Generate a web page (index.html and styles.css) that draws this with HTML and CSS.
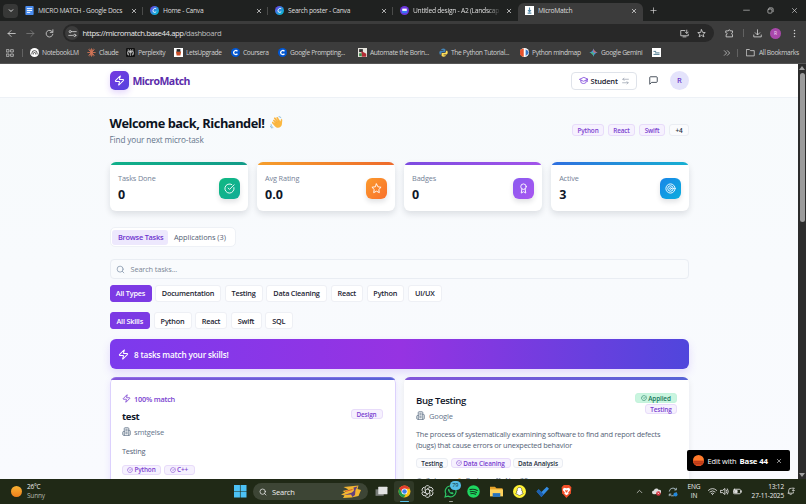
FILE: index.html
```html
<!DOCTYPE html>
<html lang="en">
<head>
  <meta charset="UTF-8" />
  <meta name="viewport" content="width=device-width, initial-scale=1.0" />
  <title>MicroMatch</title>
  <link rel="stylesheet" href="styles.css">
</head>
<body>
  <!-- shared icons -->
  <svg class="defs" width="0" height="0">
    <symbol id="i-zap" viewBox="0 0 24 24"><path d="M4 14a1 1 0 0 1-.78-1.63l9.9-10.2a.5.5 0 0 1 .86.46l-1.92 6.02A1 1 0 0 0 13 10h7a1 1 0 0 1 .78 1.63l-9.9 10.2a.5.5 0 0 1-.86-.46l1.92-6.02A1 1 0 0 0 11 14z"/></symbol>
    <symbol id="i-check" viewBox="0 0 24 24"><path d="M21.8 10A10 10 0 1 1 17 3.34M9 11l3 3L22 4"/></symbol>
    <symbol id="i-building" viewBox="0 0 24 24"><path d="M6 22V4a2 2 0 0 1 2-2h8a2 2 0 0 1 2 2v18zM6 12H4a2 2 0 0 0-2 2v6a2 2 0 0 0 2 2h2M18 9h2a2 2 0 0 1 2 2v9a2 2 0 0 1-2 2h-2M10 6h4M10 10h4M10 14h4M10 18h4"/></symbol>
    <symbol id="i-search" viewBox="0 0 24 24"><circle cx="11" cy="11" r="8"/><path d="m21 21-4.3-4.3"/></symbol>
    <symbol id="i-x" viewBox="0 0 24 24"><path d="M5 5l14 14M19 5L5 19"/></symbol>
    <symbol id="i-canva" viewBox="0 0 24 24"><circle cx="12" cy="12" r="12" fill="url(#g-canva)" stroke="none"/><path d="M16.500 8c-1-3-8-2-8.500 4s6 6 8.500 3" stroke="#fff" stroke-width="2.500"/></symbol>
    <symbol id="i-coursera" viewBox="0 0 24 24"><circle cx="12" cy="12" r="12" fill="#0056d2" stroke="none"/><path d="M17 9c-2-4-10-3-10 3s8 7 10 3" stroke="#fff" stroke-width="3.500"/></symbol>
    <linearGradient id="g-canva" x1="0" y1="0" x2="1" y2="1"><stop offset="0" stop-color="#7d2ae8"/><stop offset=".5" stop-color="#2b8fe0"/><stop offset="1" stop-color="#00c4cc"/></linearGradient>
  </svg>

  <div class="screen">
    <div class="tab-strip">
      <div class="tab-search"><svg class="icon" viewBox="0 0 24 24"><path d="m5 9 7 7 7-7"/></svg></div>
      <div class="tab">
        <svg class="fav" viewBox="0 0 24 24"><rect x="1" width="22" height="24" rx="2" fill="#4a8df0"/><path d="M5 7h14M5 12h14M5 17h9" stroke="#fff" stroke-width="2.500"/></svg>
        <span class="tab-title">MICRO MATCH - Google Docs</span>
        <svg class="icon close"><use href="#i-x"/></svg>
      </div>
      <div class="tab">
        <svg class="fav"><use href="#i-canva"/></svg>
        <span class="tab-title">Home - Canva</span>
        <svg class="icon close"><use href="#i-x"/></svg>
      </div>
      <div class="tab">
        <svg class="fav"><use href="#i-canva"/></svg>
        <span class="tab-title">Search poster - Canva</span>
        <svg class="icon close"><use href="#i-x"/></svg>
      </div>
      <div class="tab last">
        <svg class="fav" viewBox="0 0 24 24"><circle cx="12" cy="12" r="12" fill="#6b35dc"/><path d="M5 10h14v9H5z" fill="#3578f0"/><path d="M6 7h12v6H6z" fill="#fff"/></svg>
        <span class="tab-title fade">Untitled design - A2 (Landscap</span>
        <svg class="icon close"><use href="#i-x"/></svg>
      </div>
      <div class="tab active">
        <svg class="fav" viewBox="0 0 24 24"><rect width="24" height="24" fill="#fff"/><path d="M12 4v10M8 11l4 4 4-4M7 19h10" stroke="#5589a8" stroke-width="3" fill="none"/></svg>
        <span class="tab-title">MicroMatch</span>
        <svg class="icon close"><use href="#i-x"/></svg>
      </div>
      <svg class="icon plus" viewBox="0 0 24 24"><path d="M12 3v18M3 12h18"/></svg>
      <div class="window-buttons">
        <svg class="icon" viewBox="0 0 24 24"><path d="M2 11h20" stroke-width="2"/></svg>
        <svg class="icon" viewBox="0 0 24 24"><rect x="3" y="7" width="14" height="14" rx="3"/><path d="M8 3h9a4 4 0 0 1 4 4v9"/></svg>
        <svg class="icon"><use href="#i-x"/></svg>
      </div>
    </div>

    <div class="toolbar">
      <svg class="icon" viewBox="0 0 24 24"><path d="M22 12H3M11 4l-8 8 8 8"/></svg>
      <svg class="icon dim" viewBox="0 0 24 24"><path d="M2 12h19M13 4l8 8-8 8"/></svg>
      <svg class="icon" viewBox="0 0 24 24"><path d="M20 8a9 9 0 1 0 1 6M21 2v7h-7"/></svg>
      <div class="omnibox">
        <div class="site-info"><svg class="icon" viewBox="0 0 24 24"><circle cx="6" cy="7" r="3"/><path d="M12 7h10M2 17h10"/><circle cx="18" cy="17" r="3"/></svg></div>
        <span class="url">https://micromatch.base44.app<span>/dashboard</span></span>
        <svg class="icon" viewBox="0 0 24 24"><path d="M13 4H2v14h20v-4M8 21h8M18 3v8M14 8l4 4 4-4"/></svg>
        <svg class="icon" viewBox="0 0 24 24"><path d="m12 2 3 7 7 .5-5.500 4.500 2 7L12 17l-6.500 4 2-7L2 9.500 9 9z"/></svg>
      </div>
      <svg class="icon puzzle" viewBox="0 0 24 24"><path d="M3 5h6c0-4 5-4 5 0h6v5c-3 0-3 5 0 5v6H3v-6c4 0 4-5 0-5z"/></svg>
      <span class="sep"></span>
      <svg class="icon download" viewBox="0 0 24 24"><path d="M12 2v13M6 10l6 6 6-6M2 16v5h20v-5"/></svg>
      <span class="profile">R</span>
      <svg class="icon menu" viewBox="0 0 24 24"><path d="M12 4v.1M12 12v.1M12 20v.1" stroke-width="4"/></svg>
    </div>

    <div class="bookmarks">
      <svg class="icon apps" viewBox="0 0 24 24"><path d="M2 2h7v7H2zM15 2h7v7h-7zM2 15h7v7H2zM15 15h7v7h-7z"/></svg>
      <span class="sep"></span>
      <div class="bookmark"><svg class="fav" viewBox="0 0 24 24"><circle cx="12" cy="12" r="12" fill="#fff"/><path d="M5 17v-3a7 7 0 0 1 14 0v3M9 17v-2a3 3 0 0 1 6 0v2" stroke="#222" stroke-width="2" fill="none"/></svg><span>NotebookLM</span></div>
      <div class="bookmark"><svg class="fav" viewBox="0 0 24 24"><path d="M12 1v22M1 12h22M4 4l16 16M20 4 4 20M7 2l10 20M17 2 7 22" stroke="#d97757" stroke-width="2.200"/></svg><span>Claude</span></div>
      <div class="bookmark"><svg class="fav" viewBox="0 0 24 24"><rect width="24" height="24" rx="3" fill="#111"/><path d="M12 3v18M6 4l6 6 6-6v6H6zM4 10h16v7h-3M4 10v7h3M7 20v-5l5-5 5 5v5" stroke="#ddd" stroke-width="1.600" fill="none"/></svg><span>Perplexity</span></div>
      <div class="bookmark"><svg class="fav" viewBox="0 0 24 24"><rect width="24" height="24" fill="#fff"/><path d="M5 9h14l-2 11H7z" fill="#c84b24"/><path d="M7 3h10v7H7z" fill="#222"/></svg><span>LetsUpgrade</span></div>
      <div class="bookmark"><svg class="fav"><use href="#i-coursera"/></svg><span>Coursera</span></div>
      <div class="bookmark"><svg class="fav"><use href="#i-coursera"/></svg><span>Google Prompting...</span></div>
      <div class="bookmark"><svg class="fav" viewBox="0 0 24 24"><rect width="24" height="24" fill="#e8e6df"/><path d="M3 3h10v8H3z" fill="#333"/><path d="M9 8l13 7v8H10z" fill="#b22c35"/><path d="M3 14h7v8H3z" fill="#3c8a4a"/></svg><span>Automate the Borin...</span></div>
      <div class="bookmark"><svg class="fav" viewBox="0 0 24 24"><path d="M6 3q6-4 11 0v8H9q-4 0-4 6H2q-3-6 1-10h9V5H6z" fill="#4584b6"/><path d="M18 21q-6 4-11 0v-8h8q4 0 4-6h3q3 6-1 10h-9v2h6z" fill="#ffde57"/></svg><span>The Python Tutorial...</span></div>
      <div class="bookmark"><svg class="fav" viewBox="0 0 24 24"><circle cx="12" cy="12" r="12" fill="#fff"/><path d="M10 1a11 11 0 0 0 0 22z" fill="#e6532d"/><path d="M15 3q8 4 8 9t-8 9z" fill="#3b78c4"/></svg><span>Python mindmap</span></div>
      <div class="bookmark"><svg class="fav" viewBox="0 0 24 24"><path d="M12 1q2 9 11 11-9 2-11 11-2-9-11-11 9-2 11-11z" fill="#4796e3"/><path d="M12 1q2 9 11 11H12z" fill="#e5645a"/><path d="M1 12q9 2 11 11V12z" fill="#4eb96a"/></svg><span>Google Gemini</span></div>
      <svg class="fav" viewBox="0 0 24 24"><rect width="24" height="24" fill="#fff"/><path d="M4 9h7M8 13h12M4 17h16" stroke="#47758a" stroke-width="2.500"/></svg>
      <svg class="icon more" viewBox="0 0 24 24"><path d="m4 5 7 7-7 7M13 5l7 7-7 7"/></svg>
      <span class="sep"></span>
      <div class="bookmark all"><svg class="icon" viewBox="0 0 24 24"><path d="M2 4h7l3 3h10v14H2z"/></svg><span>All Bookmarks</span></div>
    </div>

    <div class="viewport">
      <main class="page">
        <header class="header">
          <div class="container header-row">
            <div class="logo"><svg class="icon"><use href="#i-zap"/></svg></div>
            <span class="brand">MicroMatch</span>
            <button class="role-btn">
              <svg class="icon cap" viewBox="0 0 24 24"><path d="M12 4 1 9l11 5 11-5zM5 11v6c4 4 10 4 14 0v-6M22 9v6"/></svg>
              <span>Student</span>
              <svg class="icon swap" viewBox="0 0 24 24"><path d="M22 6H3M7 2 3 6l4 4M2 18h19M17 14l4 4-4 4"/></svg>
            </button>
            <svg class="icon chat" viewBox="0 0 24 24"><path d="M22 15a2 2 0 0 1-2 2H7l-5 5V4a2 2 0 0 1 2-2h16a2 2 0 0 1 2 2z"/></svg>
            <span class="avatar">R</span>
          </div>
        </header>

        <div class="container">
          <section class="welcome">
            <div>
              <h1><span>Welcome back, Richandel!</span>
                <svg class="wave" viewBox="0 0 36 36"><path d="M9 14c-2-3 1-5 3-3l6 6-7-10c-1-3 2-4 4-2l8 10-5-9c-1-3 2-4 4-2l7 11 1-5c1-3 4-2 4 1l-1 12c-1 10-13 13-19 6l-8-9c-2-3 1-5 3-3l5 4z" fill="#fbb740"/><path d="m12 11 8 9M15 5l10 12M9 16l8 8" stroke="#f0a036" stroke-width="1"/><path d="M3 23c0 5 3 8 6 9M1 28c1 3 3 5 5 6M24 2c4 0 6 2 7 4" stroke="#5f9fc5" stroke-width="2" fill="none"/></svg>
              </h1>
              <p>Find your next micro-task</p>
            </div>
            <div class="my-skills">
              <span class="tag w-python">Python</span>
              <span class="tag w-react">React</span>
              <span class="tag w-swift">Swift</span>
              <span class="tag plain w-more">+4</span>
            </div>
          </section>

          <section class="stats">
            <div class="stat green">
              <div><p>Tasks Done</p><strong>0</strong></div>
              <div class="stat-icon"><svg class="icon"><use href="#i-check"/></svg></div>
            </div>
            <div class="stat orange">
              <div><p>Avg Rating</p><strong>0.0</strong></div>
              <div class="stat-icon"><svg class="icon" viewBox="0 0 24 24"><path d="m12 2 3.100 6.300 6.900 1-5 4.900 1.200 6.900L12 17.800l-6.200 3.300L7 14.200 2 9.300l6.900-1z"/></svg></div>
            </div>
            <div class="stat purple">
              <div><p>Badges</p><strong>0</strong></div>
              <div class="stat-icon"><svg class="icon" viewBox="0 0 24 24"><circle cx="12" cy="8" r="6"/><path d="m8.500 13-1.500 9 5-3 5 3-1.500-9"/></svg></div>
            </div>
            <div class="stat blue">
              <div><p>Active</p><strong>3</strong></div>
              <div class="stat-icon"><svg class="icon" viewBox="0 0 24 24"><circle cx="12" cy="12" r="10"/><circle cx="12" cy="12" r="6"/><circle cx="12" cy="12" r="2"/></svg></div>
            </div>
          </section>

          <nav class="page-tabs">
            <span class="selected">Browse Tasks</span>
            <span>Applications (3)</span>
          </nav>

          <div class="search"><svg class="icon"><use href="#i-search"/></svg><span>Search tasks...</span></div>

          <div class="filters types">
            <button class="on">All Types</button>
            <button>Documentation</button>
            <button>Testing</button>
            <button>Data Cleaning</button>
            <button>React</button>
            <button>Python</button>
            <button>UI/UX</button>
          </div>
          <div class="filters skills">
            <button class="on">All Skills</button>
            <button>Python</button>
            <button>React</button>
            <button>Swift</button>
            <button>SQL</button>
          </div>

          <div class="banner"><svg class="icon"><use href="#i-zap"/></svg><span>8 tasks match your skills!</span></div>

          <section class="tasks">
            <article class="task matched">
              <div class="match"><svg class="icon"><use href="#i-zap"/></svg><span>100% match</span></div>
              <div class="task-head">
                <div>
                  <h3>test</h3>
                  <p class="company"><svg class="icon"><use href="#i-building"/></svg><span>smtgelse</span></p>
                </div>
                <div class="task-tags"><span class="tag w-design">Design</span></div>
              </div>
              <p class="desc">Testing</p>
              <div class="skills-row">
                <span class="tag w-py"><svg class="icon"><use href="#i-check"/></svg>Python</span>
                <span class="tag w-cpp"><svg class="icon"><use href="#i-check"/></svg>C++</span>
              </div>
            </article>
            <article class="task">
              <div class="task-head">
                <div>
                  <h3>Bug Testing</h3>
                  <p class="company"><svg class="icon"><use href="#i-building"/></svg><span>Google</span></p>
                </div>
                <div class="task-tags">
                  <span class="tag applied"><svg class="icon"><use href="#i-check"/></svg>Applied</span>
                  <span class="tag w-testing">Testing</span>
                </div>
              </div>
              <p class="desc">The process of systematically examining software to find and report defects<br>(bugs) that cause errors or unexpected behavior</p>
              <div class="skills-row">
                <span class="tag plain w-testing">Testing</span>
                <span class="tag w-clean"><svg class="icon"><use href="#i-check"/></svg>Data Cleaning</span>
                <span class="tag plain w-analysis">Data Analysis</span>
              </div>
              <div class="meta">
                <span><svg class="icon" viewBox="0 0 24 24"><circle cx="12" cy="12" r="10"/><path d="M12 6v6l4 2"/></svg>3 days</span>
                <span><svg class="icon gold" viewBox="0 0 24 24"><circle cx="12" cy="8" r="6"/><path d="m8 13-1 9 5-3 5 3-1-9"/></svg>Badge</span>
                <span><svg class="icon" viewBox="0 0 24 24"><rect x="3" y="4" width="18" height="18" rx="2"/><path d="M8 1v6M16 1v6M3 10h18"/></svg>Nov 30</span>
              </div>
            </article>
          </section>
        </div>

        <div class="edit-badge">
          <svg class="base-logo" viewBox="0 0 24 24"><circle cx="12" cy="12" r="12" fill="#ff7a2b"/><path d="M0 12h24a12 12 0 0 1-24 0z" fill="#d9471c"/><path d="M1 15h22M3 19h18" stroke="#7b2815"/></svg>
          <span>Edit with</span><b>Base 44</b>
          <svg class="icon"><use href="#i-x"/></svg>
        </div>
      </main>
      <div class="scrollbar"><i class="arrow up"></i><i class="thumb"></i><i class="arrow down"></i></div>
    </div>

    <footer class="taskbar">
      <div class="weather">
        <i class="sun"></i>
        <p>26°C<br><span>Sunny</span></p>
      </div>
      <div class="dock">
        <svg class="win" viewBox="0 0 24 24"><path d="M0 0h11.400v11.400H0zM12.600 0H24v11.400H12.600zM0 12.600h11.400V24H0zM12.600 12.600H24V24H12.600z" fill="#4cc2f5"/></svg>
        <div class="task-search">
          <svg class="icon"><use href="#i-search"/></svg><span>Search</span>
          <svg class="art" viewBox="0 0 40 26"><path d="M5 4l30-3-2 7 7 2-5 12-14 3-17 1 3-5-7-2 8-4-5-3 12-3z" fill="#f2b632"/><path d="M25 5l8-2-4 7-1 10-5 4-3-5-14 1 16-5 4-4z" fill="#61417e"/><path d="m8 13 15-4" stroke="#d4582e" stroke-width="2"/></svg>
        </div>
        <svg class="app" viewBox="0 0 24 24"><rect x="1" y="8" width="15" height="12" fill="#777b77"/><rect x="6" y="3" width="17" height="14" rx="1" fill="#e2e2e2"/></svg>
        <div class="app-cell open">
          <svg class="app" viewBox="0 0 24 24"><circle cx="12" cy="12" r="11" fill="#fbc116"/><path d="M2.500 6.500A11 11 0 0 1 22 7H12l-4.500 8z" fill="#e33b2e"/><path d="M2.500 6.500A11 11 0 0 0 11 23l5-9-8 1z" fill="#229a4b"/><circle cx="12" cy="12" r="5.500" fill="#fff"/><circle cx="12" cy="12" r="4.200" fill="#3b7ded"/></svg>
        </div>
        <svg class="app" viewBox="0 0 24 24"><g fill="none" stroke="#e6e6e6" stroke-width="1.600"><path id="petal" d="M12 7.500 7.500 10V5.500a4.500 4.500 0 0 1 8.500-2"/><use href="#petal" transform="rotate(60 12 12)"/><use href="#petal" transform="rotate(120 12 12)"/><use href="#petal" transform="rotate(180 12 12)"/><use href="#petal" transform="rotate(240 12 12)"/><use href="#petal" transform="rotate(300 12 12)"/></g></svg>
        <div class="app-cell running">
          <svg class="app" viewBox="0 0 24 24"><path d="m2 22 1.500-5.500a10 10 0 1 1 4 4z" fill="#172b1c" stroke="#2fc765" stroke-width="2.200"/><path d="M8 7q-2 2 1 6t7 4l2-2-3-2-2 1q-2-1-3-3l1-2z" fill="#2fc765"/></svg>
          <span class="count">79</span>
        </div>
        <svg class="app" viewBox="0 0 24 24"><circle cx="12" cy="12" r="11.500" fill="#1ed760"/><path d="M5.500 8.500q7-2 13.500 1.500M6 12.500q6-1.500 11.500 1.500M7 16q5-1 9 1" stroke="#15391f" stroke-width="2" fill="none" stroke-linecap="round"/></svg>
        <svg class="app" viewBox="0 0 24 24"><path d="M0 3h9l3 3h11v14H0z" fill="#e6a32a"/><path d="M0 8h24v13H0z" fill="#ffd35c"/><path d="M5 15h14v7H5z" fill="#2873bd"/></svg>
        <svg class="app" viewBox="0 0 24 24"><circle cx="12" cy="12" r="12" fill="#fff335"/><path d="M12 4.500c-4 0-4.500 3-4 6l-2 1 1.500 1.500-2.500 3 3 1 1.500 1.500 2.500 1 2.500-1 1.500-1.500 3-1-2.500-3 1.500-1.500-2-1c.5-3 0-6-4-6z" fill="#fff" stroke="#333"/></svg>
        <svg class="app" viewBox="0 0 24 24"><path d="m1 12 4-4 5 5L20 3l4 4-14 15z" fill="#348de4"/><path d="m1 12 4-4 9 9-4 5z" fill="#1c5fae"/></svg>
        <svg class="app" viewBox="0 0 24 24"><path d="m7 0h10l4 4-1 11-8 9-8-9L3 4z" fill="#f4502a"/><path d="m7 5 5 1 5-1 2 4-4 5 1 2-4 3-4-3 1-2-4-5z" fill="#fff"/><path d="m9 9 3 1 3-1-2 5h-2z" fill="#f4502a"/></svg>
      </div>
      <div class="tray">
        <svg class="icon caret" viewBox="0 0 24 24"><path d="m4 16 8-8 8 8"/></svg>
        <svg class="cloud" viewBox="0 0 24 24"><path d="M5 19a5 5 0 0 1 0-10 7 7 0 0 1 13-1 5 5 0 0 1 3 10z" fill="#ddd"/><circle cx="17" cy="17" r="6" fill="#d12f3c"/><path d="m15 15 4 4m0-4-4 4" stroke="#fff" stroke-width="1.500"/></svg>
        <svg class="sync" viewBox="0 0 24 24"><path d="M3 11a9 9 0 0 1 16-5M20 2v5h-5M20 13a9 9 0 0 1-16 5M3 22v-5h5" fill="none" stroke="#b9cdd8" stroke-width="2"/><circle cx="18" cy="18" r="5" fill="#2389dc"/></svg>
        <p class="lang">ENG<br>IN</p>
        <svg class="icon wifi" viewBox="0 0 24 24"><path d="M1 9q11-10 22 0M5 13q7-6 14 0M9 17q3-2 6 0M12 20v.5"/></svg>
        <svg class="icon vol" viewBox="0 0 24 24"><path d="M2 9h5l6-5v16l-6-5H2zM17 8q3 4 0 8M20 5q5 7 0 14"/></svg>
        <svg class="icon bat" viewBox="0 0 24 24"><rect x="1" y="6" width="19" height="12" rx="3"/><path d="M4 9h7v6H4z" fill="#ddd"/><path d="M23 10v4"/></svg>
        <p class="clock">13:12<br>27-11-2025</p>
        <svg class="icon bell" viewBox="0 0 24 24"><path d="M5 17V9a7 7 0 0 1 8-7M19 13v4H3M8 20q3 3 6 0M16 2h6l-6 7h6"/></svg>
      </div>
    </footer>
  </div>
</body>
</html>
```

FILE: styles.css
```css
* {
  box-sizing: border-box;
}
body {
  margin: 0;
  font-family: "Open Sans", "Noto Sans", sans-serif;
  font-size: 7.5px;
  color: #0f172a;
  overflow: hidden;
}
p, h1, h3 {
  margin: 0;
}
button {
  font-family: inherit;
  padding: 0;
}
svg {
  display: block;
  flex: none;
}
.defs {
  position: absolute;
}
.icon {
  width: 9px;
  height: 9px;
  fill: none;
  stroke: currentColor;
  stroke-width: 2.2;
  stroke-linecap: round;
  stroke-linejoin: round;
}
.fav {
  width: 9px;
  height: 9px;
  fill: none;
}
.screen {
  display: flex;
  flex-direction: column;
  width: 806px;
  height: 504px;
  background: #3c3c3c;
}

/* browser tabs */
.tab-strip {
  display: flex;
  align-items: center;
  height: 21px;
  padding-left: 3px;
  background: #1f2120;
  color: #dedede;
}
.tab-search {
  display: flex;
  align-items: center;
  justify-content: center;
  width: 15px;
  height: 14px;
  border-radius: 4px;
  background: #373837;
}
.tab-search .icon {
  width: 6px;
  stroke-width: 4;
}
.tab {
  display: flex;
  align-items: center;
  width: 125px;
  height: 18px;
  padding: 0 6px 0 7px;
}
.tab .close {
  width: 6px;
  height: 6px;
  stroke-width: 3;
}
.tab-title {
  flex: 1;
  margin-left: 4px;
  font-size: 6.7px;
  letter-spacing: -0.27px;
  white-space: nowrap;
  overflow: hidden;
}
.fade {
  margin-right: 5px;
  -webkit-mask-image: linear-gradient(90deg, #000 85%, transparent);
  mask-image: linear-gradient(90deg, #000 85%, transparent);
}
.tab:not(.active):not(.last) {
  background: linear-gradient(#4a4b4a, #4a4b4a) 124px 50% / 1px 8px no-repeat;
}
.tab.active {
  align-self: flex-end;
  padding-bottom: 3px;
  border-radius: 6px 6px 0 0;
  background: #3c3c3c;
}
.plus {
  width: 7px;
  height: 7px;
  margin-left: 7px;
}
.window-buttons {
  display: flex;
  gap: 17px;
  margin-left: auto;
  padding-right: 8px;
}
.window-buttons .icon {
  width: 7px;
  height: 7px;
}

/* address bar */
.toolbar {
  display: flex;
  align-items: center;
  height: 24px;
  padding-left: 7px;
  color: #d5d5d5;
}
.toolbar > .icon {
  margin-right: 10px;
}
.toolbar .dim {
  color: #7c7c7c;
}
.omnibox {
  display: flex;
  align-items: center;
  width: 651px;
  height: 18px;
  margin-left: -1px;
  padding: 0 8px 0 2px;
  border-radius: 9px;
  background: #282828;
}
.site-info {
  display: flex;
  align-items: center;
  justify-content: center;
  width: 14px;
  height: 14px;
  border-radius: 7px;
  background: #3c3c3c;
}
.url {
  flex: 1;
  margin-left: 3.5px;
  font-size: 7.7px;
  letter-spacing: -0.4px;
  color: #e8e8e8;
}
.url span {
  color: #bdbdbd;
}
.omnibox > .icon + .icon {
  margin-left: 8px;
}
.sep {
  width: 1px;
  height: 8px;
  background: #626262;
}
.toolbar .puzzle {
  margin: 0 9px 0 11px;
}
.toolbar .download {
  margin: 0 8px 0 9px;
}
.profile {
  width: 11px;
  height: 11px;
  border-radius: 50%;
  background: #a948ab;
  color: #f3d9f3;
  font-size: 5px;
  line-height: 11px;
  text-align: center;
}
.toolbar .menu {
  margin: 0 0 0 9px;
}

/* bookmarks bar */
.bookmarks {
  display: grid;
  grid-template-columns: 16px 8px 57px 39px 48px 57px 47px 80px 81px 81px 69px 63px 71px 14px 9px 53px;
  align-items: center;
  height: 19px;
  padding: 0 0 3px 6px;
  border-bottom: 1px solid #555;
  color: #d0d0d0;
}
.bookmark {
  display: flex;
  align-items: center;
  gap: 3px;
  font-size: 6.7px;
  letter-spacing: -0.37px;
  white-space: nowrap;
}
.all {
  gap: 4px;
}
.bookmarks .apps, .bookmarks .more {
  width: 8px;
  height: 8px;
}

/* page */
.viewport {
  display: flex;
  height: 415px;
}
.page {
  position: relative;
  width: 798px;
  overflow: hidden;
  background: linear-gradient(#f7fafc, #f9fafe);
}
.container {
  width: 579.500px;
  margin: 0 auto 0 109.500px;
}
.header {
  height: 34px;
  border-bottom: 1px solid #edf1f6;
  background: #fff;
}
.header-row {
  display: flex;
  align-items: center;
  height: 33px;
}
.logo {
  display: flex;
  align-items: center;
  justify-content: center;
  width: 19px;
  height: 19px;
  border-radius: 5px;
  background: linear-gradient(135deg, #7638e0, #5444df);
  box-shadow: 0 3px 6px rgba(124, 58, 237, 0.2);
  color: #fff;
}
.logo .icon {
  width: 11px;
  height: 11px;
}
.brand {
  margin-left: 4px;
  font-size: 10.500px;
  font-weight: 700;
  letter-spacing: -0.55px;
  color: #5b2bab;
}
.role-btn {
  display: flex;
  align-items: center;
  width: 66px;
  height: 18px;
  margin-left: auto;
  padding: 0 7px;
  border: 1px solid #dfe3ea;
  border-radius: 4px;
  background: #fff;
  font-size: 7.500px;
  font-weight: 600;
  letter-spacing: -0.2px;
  color: #1b2230;
}
.role-btn span {
  flex: 1;
  margin-left: 2.500px;
  text-align: left;
}
.role-btn .cap {
  color: #8049da;
}
.role-btn .swap {
  width: 7px;
  height: 8px;
  color: #8b95a5;
}
.chat {
  margin: 0 12px;
  color: #28303e;
}
.avatar {
  width: 19px;
  height: 19px;
  border-radius: 50%;
  background: #e4e3fb;
  font-size: 7.500px;
  font-weight: 600;
  line-height: 19px;
  text-align: center;
  color: #6b37c8;
}
.welcome {
  display: flex;
  align-items: center;
  justify-content: space-between;
  height: 64px;
}
.welcome h1 {
  display: flex;
  align-items: center;
  gap: 5px;
  height: 18px;
  font-size: 12.800px;
  font-weight: 700;
  letter-spacing: -0.45px;
  color: #0c1322;
}
.wave {
  width: 13px;
  height: 13px;
}
.welcome p {
  height: 15px;
  font-size: 8.200px;
  line-height: 15px;
  letter-spacing: -0.12px;
  color: #64748b;
}
.my-skills {
  display: flex;
  gap: 4px;
}
.tag {
  display: flex;
  align-items: center;
  justify-content: center;
  gap: 1px;
  height: 10px;
  border: 1px solid #e8dcfa;
  border-radius: 3px;
  background: #f6f1fe;
  font-size: 6.400px;
  font-weight: 600;
  letter-spacing: -0.12px;
  white-space: nowrap;
  color: #7a3fd0;
}
.tag .icon {
  width: 6px;
  height: 6px;
}
.tag.plain {
  border-color: #eaedf3;
  background: #fafbfd;
  color: #273142;
}
.my-skills .tag {
  height: 12px;
}
.w-python { width: 32px; }
.w-react { width: 27px; }
.w-swift { width: 26px; }
.w-more { width: 20px; }
.w-design { width: 32px; }
.w-py { width: 39px; }
.w-cpp { width: 31px; }
.w-testing { width: 32px; }
.w-clean { width: 60px; }
.w-analysis { width: 50px; }

/* stat cards */
.stats {
  display: grid;
  grid-template-columns: repeat(4, 1fr);
  gap: 8.700px;
}
.stat {
  display: flex;
  align-items: center;
  justify-content: space-between;
  height: 49px;
  padding: 3px 8px 0 8.500px;
  border-radius: 6px;
  background: #fff;
  box-shadow: 0 3px 6px rgba(15, 23, 42, 0.12);
}
.stat p {
  height: 14px;
  font-size: 7.300px;
  line-height: 12px;
  letter-spacing: -0.14px;
  color: #748196;
}
.stat strong {
  display: block;
  height: 18px;
  font-size: 12.500px;
  line-height: 18px;
}
.stat-icon {
  display: flex;
  align-items: center;
  justify-content: center;
  width: 21px;
  height: 21px;
  border-radius: 6px;
  color: #fff;
  box-shadow: 0 3px 5px rgba(15, 23, 42, 0.12);
}
.stat-icon .icon {
  width: 11px;
  height: 11px;
  stroke-width: 2;
}
.green { background: linear-gradient(90deg, #10b08a, #129b88) top / 100% 3px no-repeat #fff; }
.orange { background: linear-gradient(90deg, #f59e2b, #ee6a2c) top / 100% 3px no-repeat #fff; }
.purple { background: linear-gradient(90deg, #7c4be0, #a254ea) top / 100% 3px no-repeat #fff; }
.blue { background: linear-gradient(90deg, #2f6fe0, #16b0d2) top / 100% 3px no-repeat #fff; }
.green .stat-icon { background: linear-gradient(135deg, #10b981, #12ac98); }
.orange .stat-icon { background: linear-gradient(135deg, #fb9a2d, #f9702b); }
.purple .stat-icon { background: linear-gradient(135deg, #8b5cf0, #a855f0); }
.blue .stat-icon { background: linear-gradient(135deg, #1a85e8, #0baede); }

.page-tabs {
  display: flex;
  width: 126px;
  height: 20px;
  margin-top: 16px;
  padding: 1.500px;
  border: 1px solid #eef1f6;
  border-radius: 5px;
  background: #fff;
  font-size: 7.400px;
  font-weight: 500;
  line-height: 15px;
  letter-spacing: -0.05px;
  color: #556173;
}
.page-tabs span {
  padding: 0 6px;
  white-space: nowrap;
}
.page-tabs .selected {
  width: 56px;
  height: 15px;
  border-radius: 3px;
  background: #ede8fd;
  font-weight: 600;
  letter-spacing: -0.25px;
  color: #6d33cf;
}
.search {
  display: flex;
  align-items: center;
  gap: 6px;
  height: 20px;
  margin-top: 12px;
  padding: 0 5px;
  border: 1px solid #e9edf3;
  border-radius: 4px;
  background: #f9fbfd;
  font-size: 7.400px;
  letter-spacing: -0.15px;
  color: #7c8797;
}
.search .icon {
  color: #8b9bb0;
}

/* filter pills */
.filters {
  display: grid;
  gap: 3.500px;
  height: 17px;
}
.types {
  grid-template-columns: 42px 66px 38px 61px 32.500px 37.500px 34.500px;
  margin-top: 5.500px;
}
.skills {
  grid-template-columns: 40.500px 38px 32px 31px 27.500px;
  margin-top: 10.500px;
}
.filters button {
  border: 1px solid #eef0f5;
  border-radius: 3px;
  background: #fff;
  font-size: 7.300px;
  font-weight: 600;
  letter-spacing: -0.2px;
  white-space: nowrap;
  color: #1c2432;
}
.filters .on {
  border-color: #7c3ae4;
  background: #7c3ae4;
  color: #fff;
}
.banner {
  display: flex;
  align-items: center;
  gap: 5px;
  height: 30px;
  margin-top: 10px;
  padding-left: 8.500px;
  border-radius: 6px;
  background: linear-gradient(90deg, #7c3aed, #9633e2 50%, #5046dc);
  box-shadow: 0 4px 8px rgba(139, 92, 246, 0.2);
  font-size: 8.200px;
  font-weight: 600;
  letter-spacing: -0.16px;
  color: #fff;
}
.banner .icon {
  width: 11px;
  height: 11px;
}

/* task cards */
.tasks {
  display: grid;
  grid-template-columns: 286px 285px;
  gap: 8.500px;
  margin-top: 8px;
}
.task {
  height: 140px;
  padding: 16px 12px 0 12px;
  border-radius: 6px;
  background: linear-gradient(90deg, #8455da, #5763d6) top / 100% 3px no-repeat #fff;
  box-shadow: 0 2px 6px rgba(15, 23, 42, 0.08);
}
.matched {
  padding: 14px 13px 0 12.500px;
  box-shadow: inset 0 0 0 1px rgba(167, 139, 250, 0.4), 0 2px 6px rgba(139, 92, 246, 0.15);
}
.match {
  display: flex;
  align-items: center;
  gap: 3px;
  height: 15px;
  font-size: 7.300px;
  font-weight: 600;
  letter-spacing: -0.2px;
  color: #7a3fd0;
}
.task-head {
  display: flex;
  justify-content: space-between;
}
.task h3 {
  height: 15px;
  font-size: 9.600px;
  font-weight: 600;
  line-height: 15px;
  letter-spacing: -0.33px;
}
.matched h3 {
  height: 17px;
  line-height: 21px;
  font-weight: 700;
}
.company {
  display: flex;
  align-items: center;
  gap: 4px;
  height: 15px;
  font-size: 7.500px;
  letter-spacing: -0.15px;
  color: #64748b;
}
.matched .company {
  gap: 3px;
  height: 17px;
}
.task-tags {
  display: flex;
  flex-direction: column;
  align-items: flex-end;
  gap: 1px;
}
.matched .task-tags {
  padding-top: 3px;
}
.tag.applied {
  width: 42px;
  border-color: #c4f3dc;
  background: #c9f5df;
  color: #17765a;
}
.desc {
  margin-top: 6px;
  font-size: 7.400px;
  line-height: 10.600px;
  letter-spacing: -0.21px;
  white-space: nowrap;
  color: #556377;
}
.skills-row {
  display: flex;
  gap: 2.500px;
  margin-top: 8px;
}
.meta {
  display: flex;
  gap: 9px;
  margin-top: 8px;
  font-size: 7px;
  line-height: 10px;
  color: #64748b;
}
.meta span {
  display: flex;
  align-items: center;
  gap: 3px;
}
.meta .icon {
  width: 7px;
  height: 7px;
}
.meta .gold {
  color: #d99a2b;
}

.edit-badge {
  position: absolute;
  left: 686.500px;
  top: 386px;
  display: flex;
  align-items: center;
  width: 103px;
  height: 21px;
  padding: 0 8px 0 6px;
  border-radius: 2px;
  background: #000;
  font-size: 7.500px;
  letter-spacing: -0.14px;
  white-space: nowrap;
  color: #fff;
}
.edit-badge span {
  margin: 0 3px 0 4px;
}
.edit-badge b {
  font-size: 7.800px;
  letter-spacing: -0.15px;
}
.edit-badge .icon {
  width: 6px;
  height: 6px;
  margin-left: auto;
}
.base-logo {
  width: 11px;
  height: 11px;
}
.scrollbar {
  display: flex;
  flex-direction: column;
  align-items: center;
  width: 8px;
  background: #2c2c2c;
}
.arrow {
  border: 3px solid transparent;
}
.up {
  border-top: 0;
  border-bottom: 4px solid #9f9f9f;
  margin: 2px 0 3px;
}
.down {
  border-bottom: 0;
  border-top: 4px solid #9f9f9f;
  margin: auto 0 2px;
}
.thumb {
  width: 5px;
  height: 149px;
  border-radius: 3px;
  background: #9b9b9b;
}

/* windows taskbar */
.taskbar {
  display: flex;
  align-items: center;
  height: 25px;
  background: #202916;
  color: #eee;
}
.weather {
  display: flex;
  align-items: center;
  gap: 5px;
  width: 234px;
  padding-left: 11px;
  font-size: 6.500px;
  line-height: 8.500px;
  letter-spacing: -0.2px;
}
.weather span {
  color: #b5b9b0;
}
.sun {
  width: 11px;
  height: 11px;
  border-radius: 50%;
  background: linear-gradient(#f9b233, #ee7f1c);
}
.dock {
  display: flex;
  align-items: center;
  width: 402px;
}
.win {
  width: 12.500px;
  height: 12.500px;
}
.task-search {
  display: flex;
  align-items: center;
  width: 115px;
  height: 17px;
  margin: 0 6.500px;
  padding: 0 7px 0 6px;
  border-radius: 9px;
  background: #3d4535;
  font-size: 7.500px;
  letter-spacing: -0.2px;
}
.task-search .icon {
  width: 8px;
  height: 8px;
}
.task-search span {
  flex: 1;
  margin-left: 5px;
}
.art {
  width: 20px;
  height: 13px;
}
.app {
  width: 13px;
  height: 13px;
  margin-right: 10.200px;
}
.app-cell {
  position: relative;
  display: flex;
  align-items: center;
  width: 23px;
  height: 21px;
}
.app-cell .app {
  margin: 0;
}
.open::before {
  content: "";
  position: absolute;
  left: -4px;
  width: 20px;
  height: 21px;
  border-radius: 3px;
  background: #303927;
}
.open .app {
  position: relative;
}
.open::after, .running::after {
  content: "";
  position: absolute;
  left: 2px;
  bottom: 0;
  width: 9px;
  height: 1.500px;
  border-radius: 1px;
  background: #5ac3ec;
}
.running::after {
  left: 5px;
  width: 4px;
  background: #9da198;
}
.count {
  position: absolute;
  left: 6px;
  top: 0;
  width: 11px;
  height: 9px;
  border-radius: 5px;
  background: #55bdea;
  font-size: 5.500px;
  line-height: 9px;
  text-align: center;
  color: #133;
}
.tray {
  display: flex;
  align-items: center;
  flex: 1;
  font-size: 6.500px;
  line-height: 8.500px;
  letter-spacing: -0.15px;
}
.tray .caret {
  width: 7px;
}
.cloud {
  width: 9px;
  height: 9px;
  margin-left: 9px;
}
.sync {
  width: 10px;
  height: 10px;
  margin-left: 7px;
}
.lang {
  width: 14px;
  margin-left: 9px;
  text-align: center;
}
.wifi {
  margin-left: 7px;
}
.vol {
  margin-left: 3px;
}
.bat {
  margin-left: 4px;
}
.clock {
  width: 42px;
  text-align: right;
}
.tray .bell {
  width: 8px;
  margin-left: 3px;
}
```
